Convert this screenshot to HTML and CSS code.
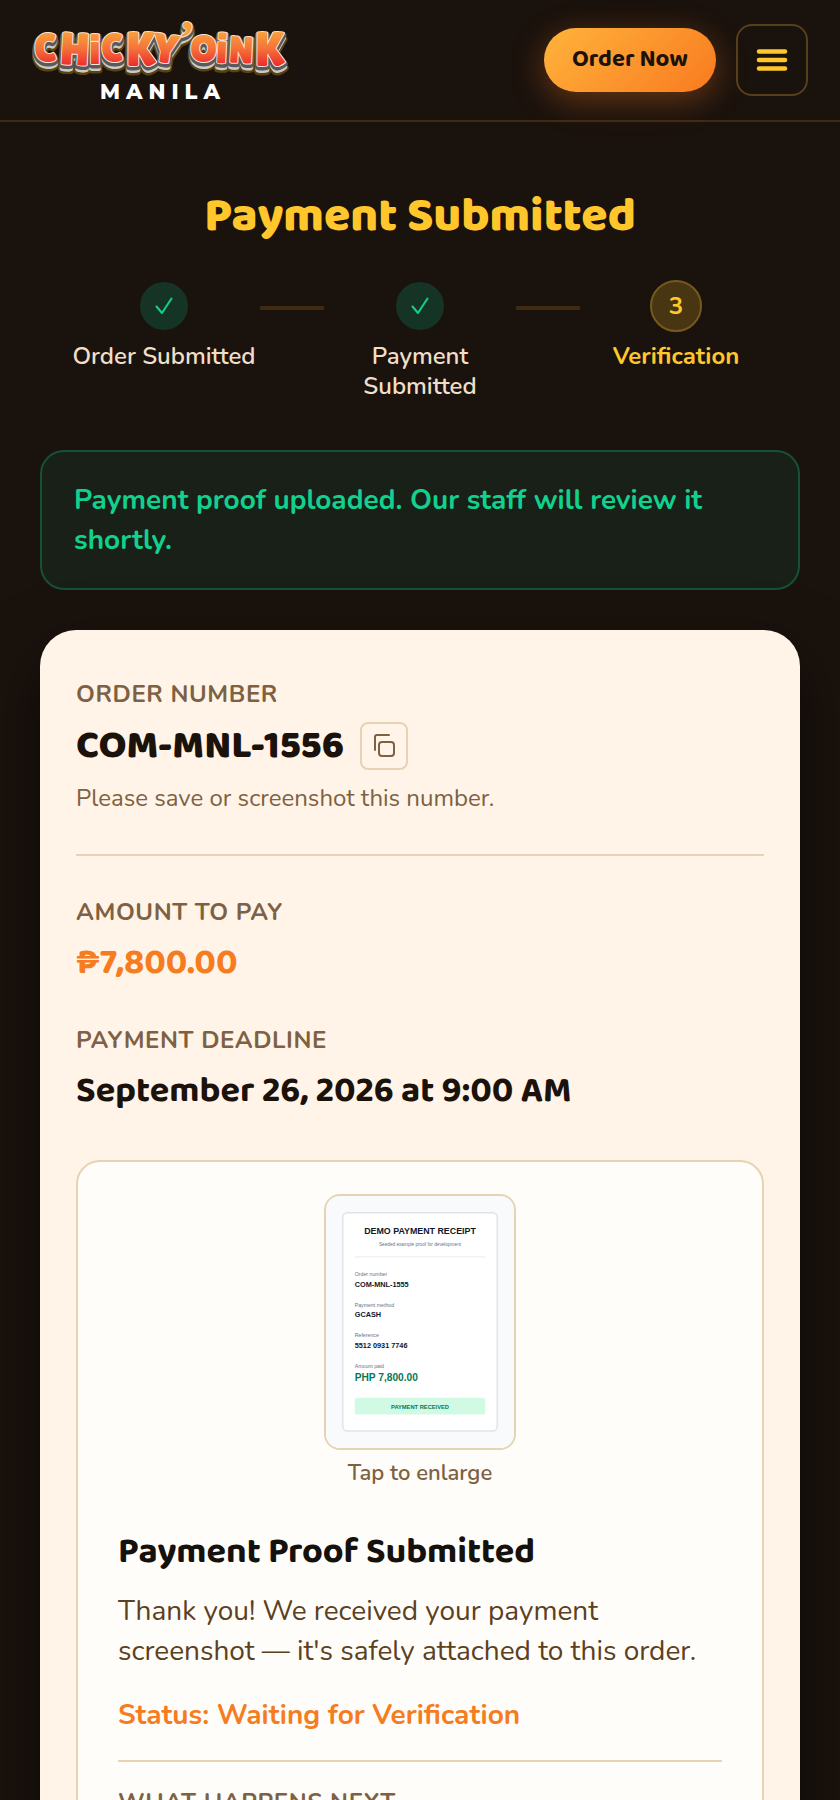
FILE: index.html
```html
<!DOCTYPE html>
<html lang="en">
<head>
<meta charset="UTF-8">
<meta name="viewport" content="width=device-width, initial-scale=1.0">
<title>Payment Submitted</title>
<link rel="stylesheet" href="styles.css">
</head>
<body>
<header class="site-header">
	<a href="#" class="logo">
		<svg width="264" height="88" viewBox="0 0 264 88" role="img" aria-label="Chicky'Oink Manila">
			<defs>
				<linearGradient id="flame" gradientUnits="userSpaceOnUse" x1="0" y1="16" x2="0" y2="50">
					<stop offset="0" stop-color="#f9a03a"/>
					<stop offset="0.5" stop-color="#f4713a"/>
					<stop offset="1" stop-color="#ee2a2c"/>
				</linearGradient>
				<g id="word">
					<text x="2" y="46" font-size="41">C</text>
					<text x="28" y="49" font-size="46" transform="rotate(3 44 34)">H</text>
					<text x="57" y="48" font-size="43">i</text>
					<text x="69" y="46" font-size="40">C</text>
					<text x="94" y="50" font-size="49">K</text>
					<text x="121" y="47" font-size="41" transform="rotate(8 134 32)">Y</text>
					<text class="logo-quote" x="147" y="38" font-size="48">’</text>
					<text x="158" y="46" font-size="39">O</text>
					<text x="184" y="47" font-size="43" transform="rotate(3 190 32)">i</text>
					<text x="197" y="47" font-size="38" transform="rotate(3 208 34)">N</text>
					<text x="223" y="50" font-size="49">K</text>
				</g>
			</defs>
			<g class="logo-word">
				<use href="#word" y="6" fill="#14100c" stroke="#5b4310" stroke-width="7"/>
				<use href="#word" y="5" fill="#c9c9c9" stroke="#c9c9c9" stroke-width="4"/>
				<use href="#word" y="2" fill="#5a5a5a" stroke="#5a5a5a" stroke-width="5"/>
				<use href="#word" fill="#ffe3d2" stroke="#ffe3d2" stroke-width="2"/>
				<use href="#word" fill="url(#flame)"/>
			</g>
			<text class="logo-city" x="131" y="83" text-anchor="middle">MANILA</text>
		</svg>
	</a>
	<div class="header-actions">
		<a href="#" class="order-btn">Order Now</a>
		<button type="button" class="menu-btn" aria-label="Menu">
			<svg width="32" height="24" viewBox="0 0 32 24" stroke="#ffc72c" stroke-width="4.500" stroke-linecap="round">
				<path d="M3 3.500h26M3 12h26M3 20.500h26"/>
			</svg>
		</button>
	</div>
</header>

<main class="content">
	<h1>Payment Submitted</h1>

	<ol class="steps">
		<li class="step">
			<span class="dot">
				<svg width="18" height="18" viewBox="0 0 18 18"><path d="M1.500 9.500L7 16 16.500 1.500"/></svg>
			</span>
			<span class="step-label">Order Submitted</span>
		</li>
		<li class="bar"></li>
		<li class="step">
			<span class="dot">
				<svg width="18" height="18" viewBox="0 0 18 18"><path d="M1.500 9.500L7 16 16.500 1.500"/></svg>
			</span>
			<span class="step-label">Payment Submitted</span>
		</li>
		<li class="bar"></li>
		<li class="step current">
			<span class="dot">3</span>
			<span class="step-label">Verification</span>
		</li>
	</ol>

	<p class="notice">Payment proof uploaded. Our staff will review it shortly.</p>

	<section class="card">
		<h2 class="label">Order Number</h2>
		<div class="order-row">
			<span class="order-number">COM-MNL-1556</span>
			<button type="button" class="copy-btn" aria-label="Copy order number">
				<svg width="24" height="24" viewBox="0 0 24 24">
					<path d="M3 16V3a2 2 0 0 1 2-2h12"/>
					<rect x="7" y="8" width="15" height="14" rx="3"/>
				</svg>
			</button>
		</div>
		<p class="hint">Please save or screenshot this number.</p>

		<hr>

		<h2 class="label">Amount to Pay</h2>
		<p class="value amount">₱7,800.00</p>
		<h2 class="label">Payment Deadline</h2>
		<p class="value">September 26, 2026 at 9:00 AM</p>

		<div class="proof">
			<button type="button" class="enlarge">
				<svg class="receipt" viewBox="0 0 720 965">
					<rect width="720" height="965" fill="#f8fafc"/>
					<rect x="64" y="64" width="592" height="836" rx="18" fill="#fff" stroke="#dfe4ec" stroke-width="6"/>
					<text class="r-title" x="360" y="146" text-anchor="middle">DEMO PAYMENT RECEIPT</text>
					<text class="r-sub" x="360" y="190" text-anchor="middle">Seeded example proof for development</text>
					<path d="M110 233H610" stroke="#e2e8f0" stroke-width="3"/>
					<text class="r-label" x="110" y="306">Order number</text>
					<text class="r-value" x="110" y="347">COM-MNL-1555</text>
					<text class="r-label" x="110" y="424">Payment method</text>
					<text class="r-value" x="110" y="465">GCASH</text>
					<text class="r-label" x="110" y="541">Reference</text>
					<text class="r-value" x="110" y="581">5512 0931 7746</text>
					<text class="r-label" x="110" y="657">Amount paid</text>
					<text class="r-paid" x="110" y="710">PHP 7,800.00</text>
					<rect x="110" y="773" width="500" height="64" rx="10" fill="#d1fae5"/>
					<text class="r-badge" x="360" y="814" text-anchor="middle">PAYMENT RECEIVED</text>
				</svg>
				<span>Tap to enlarge</span>
			</button>

			<h3>Payment Proof Submitted</h3>
			<p class="thanks">Thank you! We received your payment screenshot — it's safely attached to this order.</p>
			<p class="status">Status: Waiting for Verification</p>
			<hr>
			<h2 class="label">What Happens Next</h2>
		</div>
	</section>
</main>
</body>
</html>
```
FILE: styles.css
```css
* {
	box-sizing: border-box;
}

body {
	margin: 0;
	font-family: Nunito, Lato, "Liberation Sans", sans-serif;
	font-size: 28px;
	line-height: 40px;
	color: #1a120b;
	background-color: #1a120d;
}

h1, h2, h3, p, ol {
	margin: 0;
	padding: 0;
}

button {
	font-family: inherit;
	padding: 0;
	cursor: pointer;
}

/* header */
.site-header {
	display: flex;
	justify-content: space-between;
	align-items: center;
	height: 122px;
	padding: 0 32px;
	border-bottom: 2px solid #3d2b10;
}

.logo svg {
	display: block;
}

.logo-word {
	font-family: "Lilita One", "Open Sans", sans-serif;
	font-weight: 400;
	stroke-linejoin: round;
}

.logo-quote {
	font-family: "Liberation Serif", serif;
	font-weight: 700;
}

.logo-city {
	font-family: Montserrat, Inter, sans-serif;
	font-weight: 800;
	font-size: 21px;
	letter-spacing: 6px;
	fill: #fff;
}

.header-actions {
	display: flex;
	align-items: center;
	gap: 20px;
}

.order-btn {
	width: 172px;
	height: 64px;
	border-radius: 32px;
	background: linear-gradient(135deg, #ffb33c, #f97a1f);
	box-shadow: 0 8px 32px rgba(249, 122, 31, 0.35);
	color: #1a120b;
	font-family: "Baloo 2", Lato, sans-serif;
	font-size: 24px;
	font-weight: 700;
	line-height: 64px;
	text-align: center;
	text-decoration: none;
}

.menu-btn {
	display: flex;
	align-items: center;
	justify-content: center;
	width: 72px;
	height: 72px;
	border: 2px solid #56401a;
	border-radius: 16px;
	background: none;
}

/* page */
.content {
	padding: 64px 40px;
}

h1 {
	color: #ffc72c;
	font-family: "Baloo 2", Lato, sans-serif;
	font-size: 48px;
	font-weight: 800;
	line-height: 62px;
	text-align: center;
}

.steps {
	display: flex;
	justify-content: center;
	margin-top: 32px;
	list-style: none;
}

.step {
	display: flex;
	flex-direction: column;
	align-items: center;
	width: 192px;
	color: #f0dfc8;
	font-size: 24px;
	font-weight: 600;
	line-height: 30px;
	text-align: center;
}

.dot {
	display: flex;
	align-items: center;
	justify-content: center;
	width: 48px;
	height: 48px;
	margin: 2px 0 11px;
	border-radius: 50%;
	background: #153425;
}

.dot path {
	fill: none;
	stroke: #12d18e;
	stroke-width: 2;
	stroke-linecap: round;
	stroke-linejoin: round;
}

.current {
	color: #ffc72c;
	font-weight: 700;
}

.current .dot {
	width: 52px;
	height: 52px;
	margin: 0 0 9px;
	border: 2px solid #76591b;
	background: #483613;
}

.bar {
	width: 64px;
	height: 4px;
	margin-top: 26px;
	border-radius: 1px;
	background: #402b12;
}

.notice {
	margin-top: 49px;
	padding: 28px 32px;
	border: 2px solid #165036;
	border-radius: 24px;
	background: #182018;
	color: #12d18e;
	font-weight: 700;
}

/* order card */
.card {
	margin-top: 40px;
	padding: 48px 36px;
	border-radius: 36px;
	background: #fff4e7;
	box-shadow: 0 24px 64px rgba(0, 0, 0, 0.5);
}

hr {
	height: 2px;
	margin: 0;
	border: 0;
	background: #e5d3b3;
}

.label {
	color: #7d6142;
	font-size: 24px;
	font-weight: 700;
	line-height: 32px;
	letter-spacing: 0.025em;
	text-transform: uppercase;
}

.order-row {
	display: flex;
	align-items: center;
	gap: 16px;
	margin-top: 12px;
}

.order-number {
	font-family: "Baloo 2", Lato, sans-serif;
	font-size: 40px;
	font-weight: 800;
	line-height: 48px;
}

.copy-btn {
	display: flex;
	align-items: center;
	justify-content: center;
	width: 48px;
	height: 48px;
	border: 2px solid #e5d3b3;
	border-radius: 8px;
	background: none;
}

.copy-btn svg {
	fill: none;
	stroke: #7d6142;
	stroke-width: 2;
	stroke-linecap: round;
}

.hint {
	margin: 12px 0 40px;
	color: #7d6142;
	font-size: 24px;
	line-height: 32px;
}

.card > hr {
	margin-bottom: 40px;
}

.value {
	margin-top: 12px;
	font-family: "Baloo 2", Lato, sans-serif;
	font-size: 36px;
	font-weight: 700;
	line-height: 46px;
}

.amount {
	margin-bottom: 38px;
	color: #f57c20;
}

/* payment proof */
.proof {
	margin-top: 46px;
	padding: 32px 40px;
	border: 2px solid #e5d3b3;
	border-radius: 24px;
	background: #fffdf9;
}

.enlarge {
	display: block;
	margin: 0 auto;
	border: 0;
	background: none;
	color: #7d6142;
	font-size: 22px;
	font-weight: 600;
	line-height: 30px;
}

.enlarge span {
	display: block;
	margin-top: 8px;
}

.receipt {
	display: block;
	width: 192px;
	height: 256px;
	border: 2px solid #e5d3b3;
	border-radius: 16px;
	background: #f8fafc;
	font-family: "Liberation Sans", Arial, sans-serif;
	font-weight: 400;
}

.r-title, .r-value, .r-paid, .r-badge {
	font-weight: 700;
	fill: #0f172a;
}

.r-title {
	font-size: 34px;
}

.r-sub {
	font-size: 18px;
	fill: #64748b;
}

.r-label {
	font-size: 20px;
	fill: #64748b;
}

.r-value {
	font-size: 28px;
}

.r-paid {
	font-size: 39px;
	fill: #047857;
}

.r-badge {
	font-size: 22px;
	fill: #047857;
}

h3 {
	margin-top: 40px;
	color: #15110d;
	font-family: "Baloo 2", Lato, sans-serif;
	font-size: 36px;
	font-weight: 700;
	line-height: 48px;
}

.thanks {
	margin-top: 15px;
	color: #5c4022;
}

.status {
	margin: 24px 0 25px;
	color: #f57c20;
	font-weight: 700;
}

.proof .label {
	margin-top: 24px;
}
```
